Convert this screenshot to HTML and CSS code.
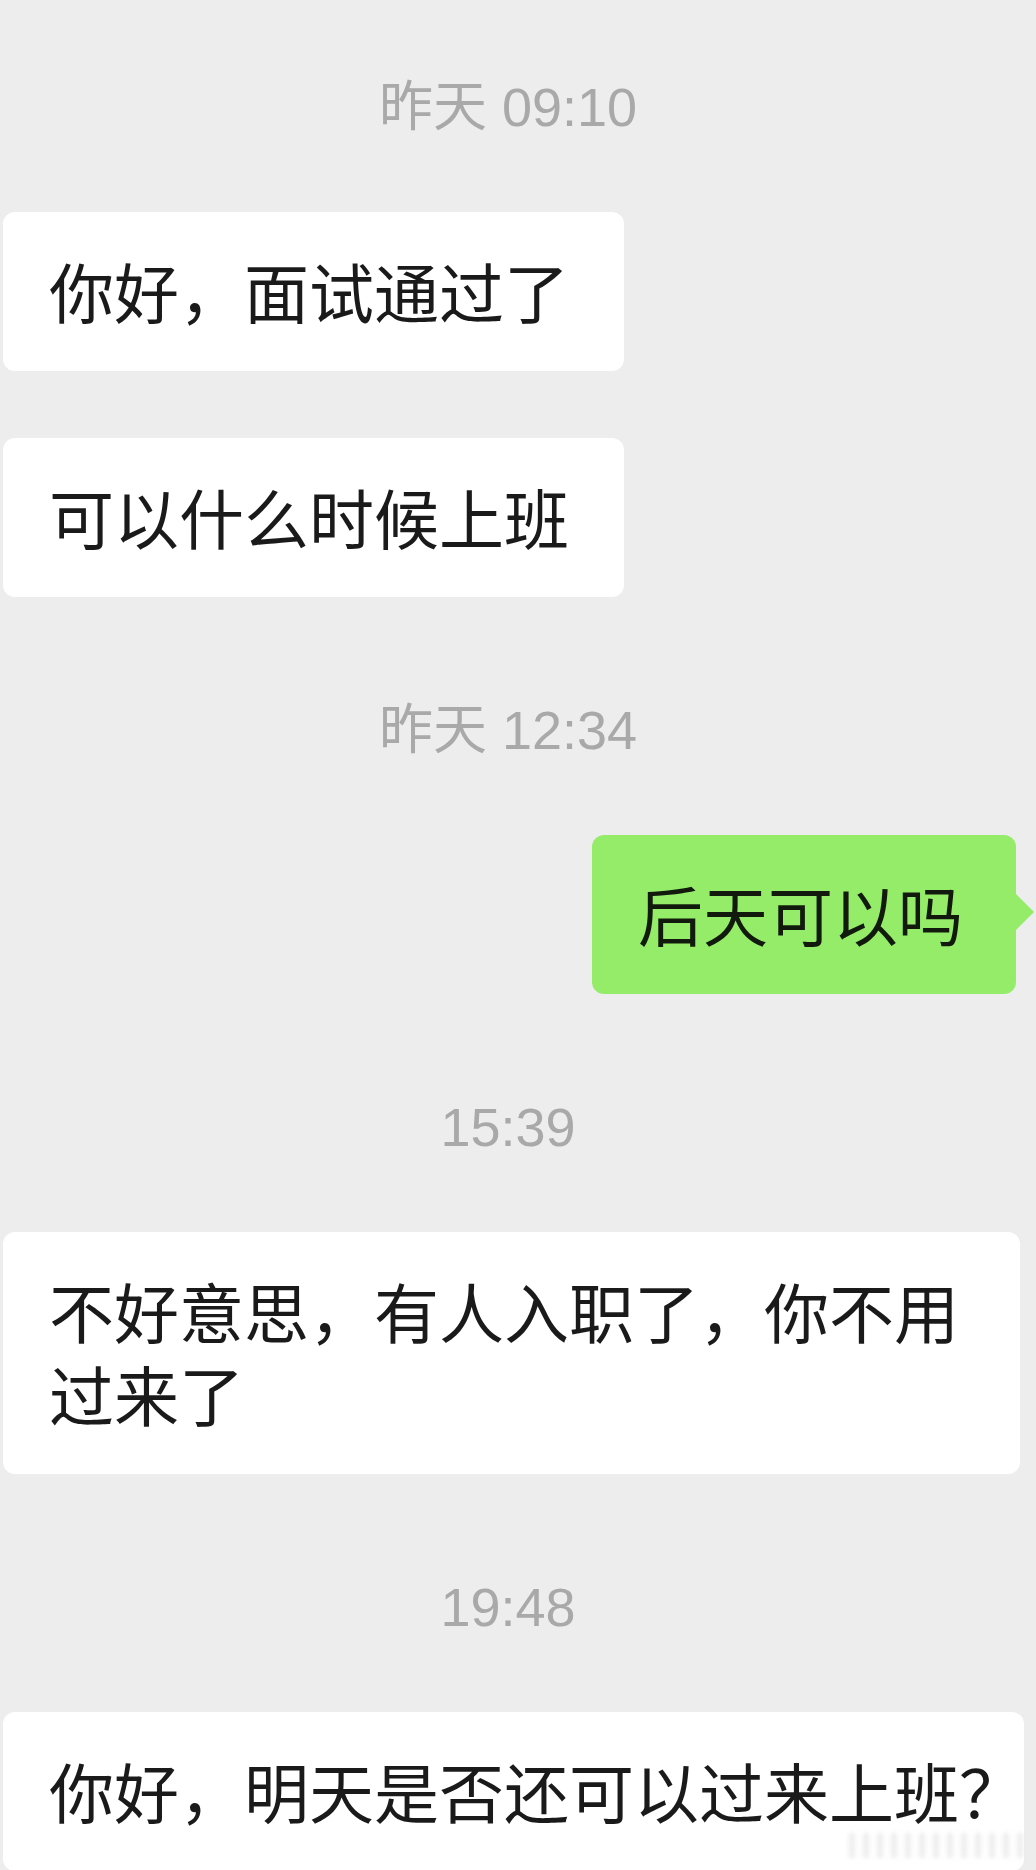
FILE: index.html
```html
<!DOCTYPE html>
<html lang="zh-CN">
<head>
    <meta charset="UTF-8">
    <meta name="viewport" content="width=device-width, initial-scale=1.0">
    <link rel="stylesheet" href="styles.css">
</head>
<body>
    <div class="chat">

        <!-- Yesterday morning -->
        <div class="time">昨天 09:10</div>
        <div class="bubble">你好，面试通过了</div>
        <div class="bubble">可以什么时候上班</div>

        <!-- Reply -->
        <div class="time">昨天 12:34</div>
        <div class="bubble mine">后天可以吗</div>

        <div class="time">15:39</div>
        <div class="bubble">不好意思，有人入职了，你不用过来了</div>

        <div class="time">19:48</div>
        <div class="bubble single-line">
            你好，明天是否还可以过来上班？
            <span class="watermark"></span>
        </div>
    </div>
</body>
</html>
```

FILE: styles.css
```css
html, body {
    margin: 0;
    padding: 0;
    height: 1870px;
    overflow: hidden;
}

body {
    background-color: #ededed;
    font-family: "Noto Sans CJK SC", sans-serif;
}

.chat {
    width: 1020px;
    padding-top: 75px;
    display: flex;
    flex-direction: column;
    align-items: flex-start;
}

.time {
    width: 1016px;
    margin-top: 101.5px;
    text-align: center;
    font-family: "Liberation Sans", "Noto Sans CJK SC", sans-serif;
    font-size: 54px;
    line-height: 64px;
    color: #a9a9a9;
}

    .time:first-child {
        margin-top: 0;
    }

.bubble {
    position: relative;
    box-sizing: border-box;
    max-width: 1017px;
    margin-left: 3px;
    margin-top: 67px;
    padding: 37px 55px 39px 46px;
    background-color: #fff;
    border-radius: 12px;
    font-size: 65px;
    line-height: 83px;
    color: #1a1a1a;
}

    .time + .bubble {
        margin-top: 72.5px;
    }

.mine {
    align-self: flex-end;
    margin-right: 4px;
    padding-right: 53px;
    background-color: #95ec69;
    color: #111a0d;
}

    .mine::after {
        content: "";
        position: absolute;
        top: 59px;
        right: -18px;
        border-top: 18px solid transparent;
        border-bottom: 18px solid transparent;
        border-left: 18px solid #95ec69;
    }

.single-line {
    max-width: none;
    padding-right: 0;
    white-space: nowrap;
}

/* blurred site mark in the corner */
.watermark {
    position: absolute;
    left: 846px;
    top: 121px;
    width: 175px;
    height: 25px;
    background: repeating-linear-gradient(90deg, #e2e2e2 0 6px, transparent 6px 14px);
    filter: blur(2px);
    opacity: 0.6;
}
```
